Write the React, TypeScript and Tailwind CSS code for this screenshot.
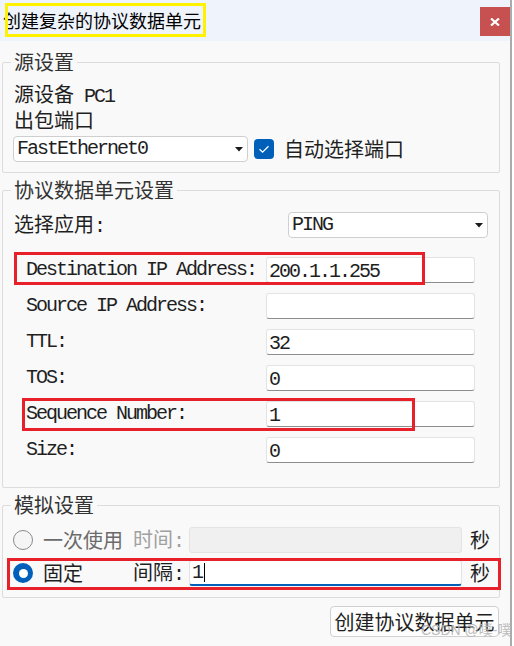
import React from 'react';

const cjk = "font-['Noto_Sans_CJK_SC',sans-serif]";
// SimSun-like half-width latin: 10px advance
const mono = "font-['Liberation_Mono',monospace] text-[20px] tracking-[-2px]";

const Latin: React.FC<{ children: React.ReactNode }> = ({ children }) => (
  <span className={mono}>{children}</span>
);

const Arrow = () => (
  <svg width="8" height="5" viewBox="0 0 8 5" className="shrink-0">
    <polygon points="0,0 8,0 4,4.5" fill="#1a1a1a" />
  </svg>
);

const Field: React.FC<{ label: string; value?: string; first?: boolean }> = ({ label, value = '', first }) => (
  <div className={`flex items-center h-[26px] ${first ? 'mt-[19px]' : 'mt-[10px]'}`}>
    <div className={`ml-[15px] w-[240px] leading-[26px] text-[#1f1f1f] ${mono}`}>{label}</div>
    <div className="w-[209px] h-[26px] bg-white border border-[#e3e3e3] border-b-[#8d8d8d] rounded-[3px] pl-[2px] leading-[25px] text-[#1f1f1f]">
      <Latin>{value}</Latin>
    </div>
  </div>
);

export default function App() {
  return (
    <div className={`relative w-[514px] h-[646px] bg-white overflow-hidden ${cjk}`}>
      <div className="w-[512px] h-full border-r-2 border-[#ababab] bg-[#f9f9f9] flex flex-col">
        {/* title bar */}
        <div className="h-[41px] shrink-0 bg-[#eff3fb] flex items-start justify-between">
          <div className="ml-[3px] mt-[8px] text-[18px] leading-[24px] text-black">创建复杂的协议数据单元</div>
          <div className="mt-[7px] w-[30px] h-[29px] bg-[#c75050] flex items-center justify-center">
            <svg width="10" height="8" viewBox="0 0 10 8">
              <path d="M1 0.5 L9 7.5 M9 0.5 L1 7.5" stroke="white" strokeWidth="2.2" />
            </svg>
          </div>
        </div>

        {/* 源设置 */}
        <fieldset className="ml-[2px] mt-[11px] w-[498px] border border-[#dcdcdc] rounded-[2px] px-[8px] pb-[10px]">
          <legend className="px-[3px] text-[20px] leading-[20px] text-[#333]">源设置</legend>
          <div className="mt-[9px] pl-[3px] h-[26px] leading-[26px] text-[20px] text-[#1f1f1f]">
            源设备<Latin> PC1</Latin>
          </div>
          <div className="pl-[3px] h-[26px] leading-[26px] text-[20px] text-[#1f1f1f]">出包端口</div>
          <div className="mt-[3px] flex items-center">
            <div className="ml-[2px] w-[235px] h-[26px] bg-white border border-[#cfcfcf] rounded-[4px] flex items-center justify-between pl-[3px] pr-[4px] text-[#1f1f1f]">
              <Latin>FastEthernet0</Latin>
              <Arrow />
            </div>
            <div className="ml-[6px] w-[20px] h-[20px] rounded-[4px] bg-[#005fb8] flex items-center justify-center">
              <svg width="20" height="20" viewBox="0 0 20 20">
                <polyline points="5.5,10.2 8.6,13.2 14.5,7.2" fill="none" stroke="white" strokeWidth="1.3" />
              </svg>
            </div>
            <span className="ml-[10px] text-[20px] leading-[26px] text-[#1f1f1f]">自动选择端口</span>
          </div>
        </fieldset>

        {/* 协议数据单元设置 */}
        <fieldset className="ml-[2px] mt-[7px] w-[498px] border border-[#dcdcdc] rounded-[2px] px-[8px] pb-[24px]">
          <legend className="px-[3px] text-[20px] leading-[20px] text-[#333]">协议数据单元设置</legend>
          <div className="mt-[12px] flex items-center h-[26px]">
            <div className="ml-[3px] w-[274px] text-[20px] leading-[26px] text-[#1f1f1f]">
              选择应用<Latin>:</Latin>
            </div>
            <div className="w-[200px] h-[26px] bg-white border border-[#cfcfcf] rounded-[4px] flex items-center justify-between pl-[3px] pr-[4px] text-[#1f1f1f]">
              <Latin>PING</Latin>
              <Arrow />
            </div>
          </div>
          <Field first label="Destination IP Address:" value="200.1.1.255" />
          <Field label="Source IP Address:" />
          <Field label="TTL:" value="32" />
          <Field label="TOS:" value="0" />
          <Field label="Sequence Number:" value="1" />
          <Field label="Size:" value="0" />
        </fieldset>

        {/* 模拟设置 */}
        <fieldset className="ml-[2px] mt-[7px] w-[498px] border border-[#dcdcdc] rounded-[2px] px-[8px] pb-[11px]">
          <legend className="px-[3px] text-[20px] leading-[20px] text-[#333]">模拟设置</legend>
          <div className="mt-[12px] flex items-center h-[26px]">
            <div className="ml-[2px] w-[20px] h-[20px] rounded-full border border-[#8a8a8a] bg-[#f5f5f5]" />
            <span className="ml-[10px] w-[90px] text-[20px] leading-[26px] text-[#6b6b6b]">一次使用</span>
            <span className="w-[56px] text-[20px] leading-[26px] text-[#a0a0a0]">
              时间<Latin>:</Latin>
            </span>
            <div className="w-[273px] h-[26px] bg-[#f0f0f0] border border-[#e3e3e3] rounded-[3px]" />
            <span className="ml-[8px] text-[20px] leading-[26px] text-[#1f1f1f]">秒</span>
          </div>
          <div className="mt-[7px] flex items-center h-[26px]">
            <div className="ml-[2px] w-[20px] h-[20px] rounded-full bg-[#005fb8] flex items-center justify-center">
              <div className="w-[9px] h-[9px] rounded-full bg-white" />
            </div>
            <span className="ml-[10px] w-[90px] text-[20px] leading-[26px] text-[#1f1f1f]">固定</span>
            <span className="w-[56px] text-[20px] leading-[26px] text-[#1f1f1f]">
              间隔<Latin>:</Latin>
            </span>
            <div className="w-[273px] h-[26px] bg-white border border-[#e3e3e3] border-b-2 border-b-[#005fb8] rounded-[3px] pl-[2px] flex items-center text-[#1f1f1f]">
              <Latin>1</Latin>
              <div className="ml-[2px] w-px h-[19px] bg-black" />
            </div>
            <span className="ml-[8px] text-[20px] leading-[26px] text-[#1f1f1f]">秒</span>
          </div>
        </fieldset>

        <div className="ml-[330px] mt-[8px] w-[169px] h-[31px] bg-[#fdfdfd] border border-[#d0d0d0] rounded-[4px] flex items-center justify-center text-[20px] leading-[26px] text-[#1f1f1f]">
          创建协议数据单元
        </div>
      </div>

      {/* annotations */}
      <div className="absolute left-[5px] top-[3px] w-[201px] h-[34px] border-[3px] border-[#fff200] pointer-events-none" />
      <div className="absolute left-[14px] top-[252px] w-[411px] h-[33px] border-[3px] border-[#e8202a] pointer-events-none" />
      <div className="absolute left-[22px] top-[398px] w-[393px] h-[33px] border-[3px] border-[#e8202a] pointer-events-none" />
      <div className="absolute left-[7px] top-[558px] w-[494px] h-[32px] border-[3px] border-[#e8202a] pointer-events-none" />
      <div className="absolute left-[421px] top-[622px] text-[14px] leading-[16px] text-[#b4b4b4]/90 font-['Liberation_Sans','Noto_Sans_CJK_SC',sans-serif]">
        CSDN @噗-噗
      </div>
    </div>
  );
}
